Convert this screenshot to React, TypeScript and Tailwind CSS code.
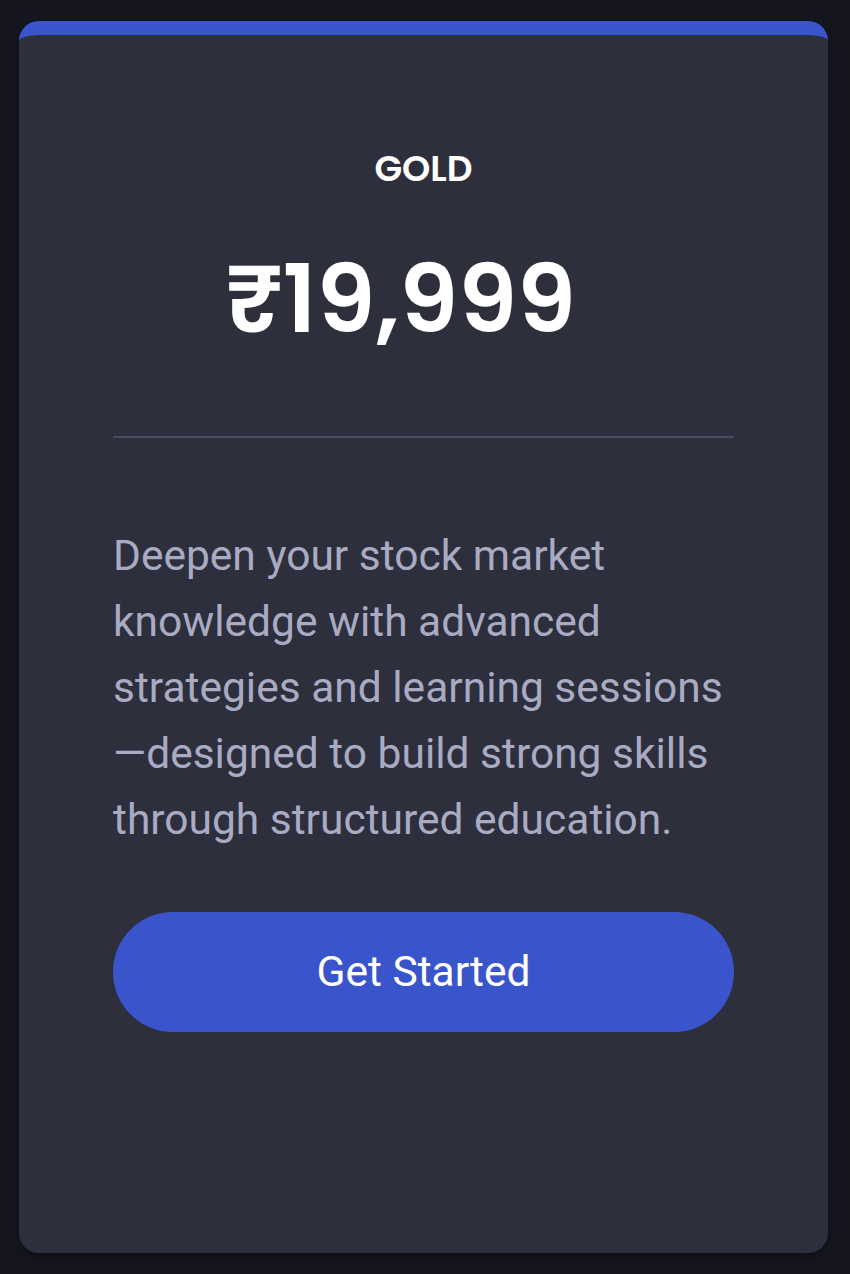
export default function App() {
  return (
    <div className="min-h-[1274px] bg-[#16161f] pl-[19px] pt-[21px]">
      <div className="flex h-[1232px] w-[809px] flex-col rounded-[20px] border-t-[14px] border-[#3a55cb] bg-[#2d2f3d] px-[94px] shadow-[0_4px_12px_rgba(0,0,0,0.35)]">
        <h3 className="mt-[112px] text-center font-['Poppins','Inter',sans-serif] text-[36px] font-semibold leading-[44px] text-white">
          GOLD
        </h3>
        <p className="mt-[63px] pr-[46px] text-center font-['Poppins','Inter','Noto_Sans',sans-serif] text-[94px] font-semibold leading-[90px] text-white">
          ₹19,999
        </p>
        <div className="mt-[92px] h-[2px] bg-[#4a4b5c]" />
        <p className="mt-[85px] font-['Roboto',sans-serif] text-[42.5px] leading-[66px] text-[#a9abc3]">
          Deepen your stock market knowledge with advanced strategies and learning sessions—designed to build strong skills through structured education.
        </p>
        <button className="mt-[59px] h-[120px] w-full rounded-full bg-[#3a55cb] font-['Roboto',sans-serif] text-[42.5px] text-white">
          Get Started
        </button>
      </div>
    </div>
  );
}
